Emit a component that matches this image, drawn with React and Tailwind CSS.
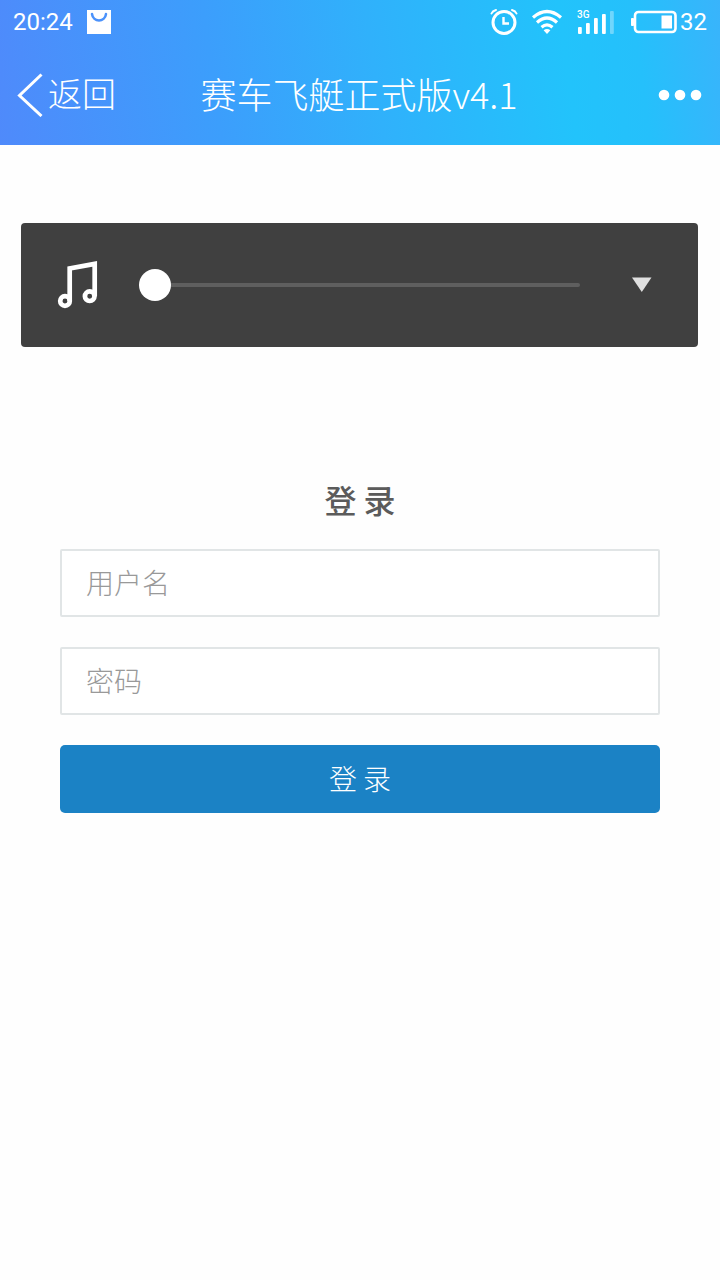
import React from "react";

function StatusBar() {
  return (
    <div className="flex h-11 items-center justify-between px-[13px] font-['Roboto',sans-serif] text-2xl">
      <div className="flex items-center gap-3.5">
        <span>20:24</span>
        <svg width="24" height="24" viewBox="0 0 24 24" aria-hidden="true">
          <path d="M0 0H24V24H0Z" fill="#fff" />
          <path d="M5 4C6 12.500 18 12.500 19 4" fill="none" stroke="#4b92fb" strokeWidth="2.500" strokeLinecap="round" />
        </svg>
      </div>
      <div className="flex items-center">
        <svg width="28" height="28" viewBox="0 0 28 28" fill="none" stroke="#fff" strokeLinecap="round" aria-hidden="true" className="mr-[13px]">
          <circle cx="14" cy="14.500" r="11" strokeWidth="3" />
          <path d="M13.500 9V15.500H19" strokeWidth="2.400" strokeLinecap="butt" />
          <path d="M1.500 5.500Q2.500 3 6 2M26.500 5.500Q25.500 3 22 2" strokeWidth="2" />
        </svg>
        <svg width="32" height="26" viewBox="0 0 32 26" fill="none" stroke="#fff" strokeWidth="3.200" aria-hidden="true" className="mr-3.5">
          <path d="M2 8.500Q16 -3.500 30 8.500" />
          <path d="M6 13.500Q16 4.500 26 13.500" />
          <path d="M10.500 18.200Q16 13.500 21.500 18.200" />
          <path d="M16 25L12.600 21.200Q16 18.800 19.400 21.200Z" fill="#fff" stroke="none" />
        </svg>
        <svg width="38" height="26" viewBox="0 0 38 26" fill="#fff" aria-hidden="true" className="mr-4">
          <text x="0" y="9" fontSize="10" fontWeight="500" fontFamily="Roboto, sans-serif">3G</text>
          <rect x="1" y="18" width="3.800" height="7" rx="1" />
          <rect x="9" y="14" width="3.800" height="11" rx="1" />
          <rect x="17" y="9" width="3.800" height="16" rx="1" />
          <rect x="25" y="5" width="3.800" height="20" rx="1" />
          <rect x="33" y="2" width="3.800" height="23" rx="1" opacity="0.35" />
        </svg>
        <svg width="46" height="24" viewBox="0 0 46 24" aria-hidden="true" className="mr-[3px]">
          <rect x="4" y="2" width="40.500" height="20" rx="3.500" fill="none" stroke="#fff" strokeWidth="2.600" />
          <path d="M2.500 8.500H0.500V15.500H2.500Z" fill="#fff" stroke="#fff" strokeLinejoin="round" />
          <rect x="30.500" y="5.500" width="10.500" height="13" fill="#fff" />
        </svg>
        <span>32</span>
      </div>
    </div>
  );
}

function NavBar() {
  return (
    <nav className="grid h-[101px] grid-cols-[1fr_auto_1fr] items-center pr-[18px] pl-4 font-light">
      <button type="button" className="flex items-center justify-self-start text-[34px] leading-10">
        <svg width="32" height="44" viewBox="0 0 32 44" fill="none" stroke="#fff" strokeWidth="3" aria-hidden="true">
          <path d="M25.500 1.500L3.500 22.500L25.500 43" />
        </svg>
        <span className="pb-1">返回</span>
      </button>
      <h1 className="pb-1 text-4xl">赛车飞艇正式版v4.1</h1>
      <button type="button" aria-label="更多" className="justify-self-end">
        <svg width="44" height="12" viewBox="0 0 44 12" fill="#fff" aria-hidden="true">
          <circle cx="6" cy="6" r="5.300" />
          <circle cx="22" cy="6" r="5.300" />
          <circle cx="38" cy="6" r="5.300" />
        </svg>
      </button>
    </nav>
  );
}

function Player() {
  return (
    <section className="mt-[78px] mr-[22px] ml-[21px] flex h-[124px] items-center rounded-[4px] bg-[#404040] pr-[46px] pl-9">
      <svg width="42" height="48" viewBox="0 0 42 48" fill="none" stroke="#fff" strokeWidth="4.700" aria-hidden="true" className="mr-10">
        <circle cx="8" cy="40" r="4.800" />
        <circle cx="32.700" cy="35.200" r="4.800" />
        <path d="M12.700 40V7.500L37.700 2.900V35.200" />
      </svg>
      <input
        type="range"
        min="0"
        max="100"
        defaultValue="0"
        aria-label="播放进度"
        className="h-8 min-w-0 flex-1 appearance-none bg-transparent [&::-webkit-slider-runnable-track]:h-1 [&::-webkit-slider-runnable-track]:rounded-full [&::-webkit-slider-runnable-track]:bg-[#5f5f5f] [&::-webkit-slider-thumb]:-mt-3.5 [&::-webkit-slider-thumb]:size-8 [&::-webkit-slider-thumb]:appearance-none [&::-webkit-slider-thumb]:rounded-full [&::-webkit-slider-thumb]:bg-white"
      />
      <button type="button" aria-label="展开" className="ml-[52px]">
        <svg width="20" height="16" viewBox="0 0 20 16" aria-hidden="true" className="block">
          <path d="M0 0.500H19.500L9.800 15Z" fill="#e0e0e0" />
        </svg>
      </button>
    </section>
  );
}

function Field({ name, label, type }) {
  return (
    <input
      name={name}
      type={type}
      placeholder={label}
      aria-label={label}
      className="h-[68px] w-full rounded-[2px] border-2 border-[#e1e5e6] bg-white px-6 pb-0.5 text-[28px] font-light text-[#555] outline-none placeholder:text-[#999]"
    />
  );
}

export default function App() {
  return (
    <div className="min-h-screen bg-[#fefefe] font-['Noto_Sans_CJK_SC',sans-serif]">
      <header className="bg-[linear-gradient(82deg,#4f8afb_0%,#3c9efc_30%,#30b1fb_52%,#22c3fb_78%,#25c0fb_88%,#39b4fb_100%)] text-white">
        <StatusBar />
        <NavBar />
      </header>
      <main>
        <Player />
        <form className="mx-[60px] mt-32 flex flex-col gap-[30px]" onSubmit={(e) => e.preventDefault()}>
          <h2 className="-mb-1 text-center text-[32px] leading-12 font-medium text-[#5b5b5b]">登 录</h2>
          <Field name="username" label="用户名" type="text" />
          <Field name="password" label="密码" type="password" />
          <button type="submit" className="h-[68px] rounded-[5px] bg-[#1b82c5] pb-0.5 text-[28px] font-light text-white">登 录</button>
        </form>
      </main>
    </div>
  );
}
